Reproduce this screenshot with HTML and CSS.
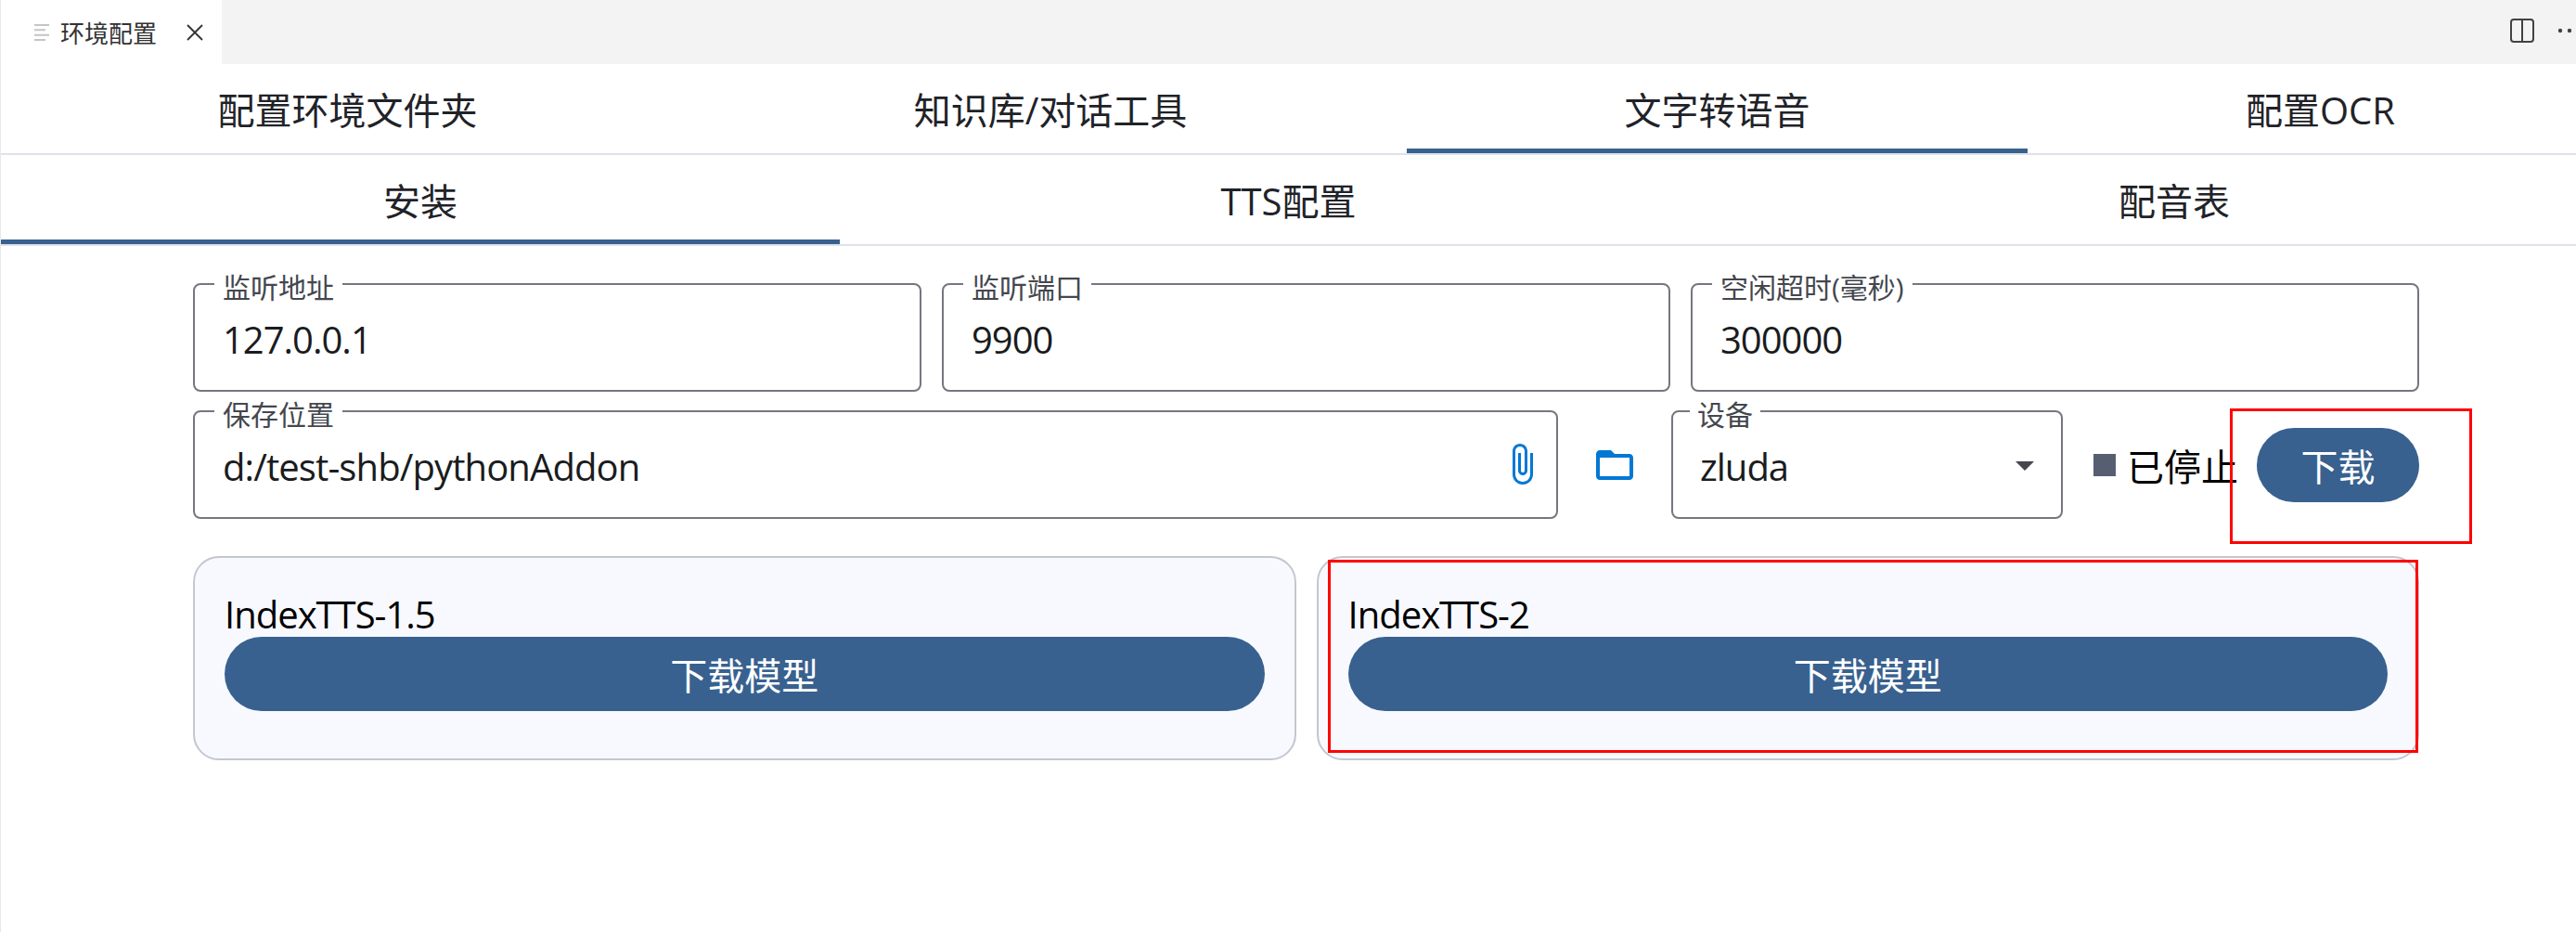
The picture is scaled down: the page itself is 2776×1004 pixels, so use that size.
FILE: index.html
```html
<!DOCTYPE html>
<html lang="zh-CN">
<head>
    <meta charset="UTF-8">
    <title>环境配置</title>
    <link rel="stylesheet" href="styles.css">
</head>
<body>
    <header class="editor-bar">
        <div class="editor-tab">
            <svg class="tab-lines" width="16" height="18" viewBox="0 0 16 18">
                <path d="M0 1h16M0 6.300h12M0 11.700h16M0 17h12" stroke="#c5c5c5" stroke-width="2"/>
            </svg>
            <span class="tab-title">环境配置</span>
            <svg class="tab-close" width="18" height="18" viewBox="0 0 18 18">
                <path d="M1 1l16 16M17 1L1 17" stroke="#333" stroke-width="1.800" fill="none"/>
            </svg>
        </div>
        <div class="editor-actions">
            <svg width="26" height="26" viewBox="0 0 26 26">
                <rect x="1" y="1" width="24" height="24" rx="3" stroke="#424242" stroke-width="2" fill="none"/>
                <path d="M13 1v24" stroke="#424242" stroke-width="2"/>
            </svg>
            <svg class="more-dots" width="28" height="6" viewBox="0 0 28 6">
                <circle cx="3" cy="3" r="2.200" fill="#424242"/>
                <circle cx="13" cy="3" r="2.200" fill="#424242"/>
                <circle cx="23" cy="3" r="2.200" fill="#424242"/>
            </svg>
        </div>
    </header>

    <nav class="tabs tabs-main">
        <div class="tab">配置环境文件夹</div>
        <div class="tab">知识库/对话工具</div>
        <div class="tab active">文字转语音</div>
        <div class="tab tab-last">配置OCR</div>
    </nav>

    <nav class="tabs tabs-sub">
        <div class="tab active">安装</div>
        <div class="tab">TTS配置</div>
        <div class="tab">配音表</div>
    </nav>

    <main class="content">
        <div class="row-three">
            <div class="field">
                <span class="field-label">监听地址</span>
                <span class="field-value">127.0.0.1</span>
            </div>
            <div class="field">
                <span class="field-label">监听端口</span>
                <span class="field-value">9900</span>
            </div>
            <div class="field">
                <span class="field-label">空闲超时(毫秒)</span>
                <span class="field-value">300000</span>
            </div>
        </div>

        <div class="row-install">
            <div class="field field-path">
                <span class="field-label">保存位置</span>
                <span class="field-value">d:/test-shb/pythonAddon</span>
                <svg class="clip-icon" width="48" height="48" viewBox="0 0 24 24">
                    <path fill="#0078d4" d="M16.500 6v11.500c0 2.210-1.790 4-4 4s-4-1.790-4-4V5c0-1.380 1.120-2.500 2.500-2.500s2.500 1.120 2.500 2.500v10.500c0 .55-.45 1-1 1s-1-.45-1-1V6H10v9.500c0 1.380 1.120 2.500 2.500 2.500s2.500-1.120 2.500-2.500V5c0-2.210-1.790-4-4-4S7 2.790 7 5v12.500c0 3.040 2.460 5.500 5.500 5.500s5.500-2.460 5.500-5.500V6h-1.500z"/>
                </svg>
            </div>
            <div class="folder-btn">
                <svg width="48" height="48" viewBox="0 0 24 24">
                    <path fill="#0078d4" d="M20 6h-8l-2-2H4c-1.100 0-1.990.9-1.990 2L2 18c0 1.100.9 2 2 2h16c1.100 0 2-.9 2-2V8c0-1.100-.9-2-2-2zm0 12H4V8h16v10z"/>
                </svg>
            </div>
            <div class="field field-select">
                <span class="field-label">设备</span>
                <span class="field-value">zluda</span>
                <span class="select-arrow"></span>
            </div>
            <div class="status">
                <span class="status-square"></span>
                <span class="status-text">已停止</span>
            </div>
            <button class="pill pill-small">下载</button>
        </div>

        <div class="cards">
            <section class="card">
                <div class="card-title">IndexTTS-1.5</div>
                <button class="pill">下载模型</button>
            </section>
            <section class="card">
                <div class="card-title">IndexTTS-2</div>
                <button class="pill">下载模型</button>
            </section>
        </div>
    </main>

    <!-- red annotation boxes drawn on the screenshot -->
    <div class="mark mark-download"></div>
    <div class="mark mark-card"></div>
</body>
</html>
```

FILE: styles.css
```css
* {
    box-sizing: border-box;
    margin: 0;
    padding: 0;
}
html, body {
    height: 100%;
    overflow: hidden;
}
body {
    position: relative;
    background: #fff;
    border-left: 1px solid #e8e8e8;
    color: #1f2328;
    font-family: "Open Sans", "Noto Sans CJK SC", sans-serif;
    font-size: 40px;
}

/* editor tab strip */
.editor-bar {
    display: flex;
    justify-content: space-between;
    height: 69px;
    margin-left: -1px;
    background: #f3f3f3;
}
.editor-tab {
    display: flex;
    align-items: center;
    width: 239px;
    padding: 0 0 0 37px;
    background: #fff;
}
.tab-title {
    margin-left: 12px;
    font-size: 26px;
    color: #333;
}
.tab-close {
    margin-left: 32px;
}
.editor-actions {
    display: flex;
    align-items: center;
    gap: 25px;
    margin-right: -8px;
}
.editor-actions svg {
    margin-top: -4px;
    flex: none;
}

/* tabs */
.tabs {
    display: grid;
    border-bottom: 2px solid #dfe2eb;
}
.tabs-main {
    grid-template-columns: 747px 768px 669px 591px;
    height: 98px;
}
.tabs-sub {
    grid-template-columns: 904px 967px 904px;
    height: 98px;
}
.tab {
    display: flex;
    align-items: center;
    justify-content: center;
    height: 96px;
    padding-top: 4px;
    border-bottom: 5px solid transparent;
    white-space: nowrap;
}
.tab.active {
    border-bottom-color: #38618f;
}
.tab-last {
    padding-left: 40px;
}
.tabs-sub .tab:last-child {
    padding-left: 38px;
}

/* form */
.content {
    padding: 40px 169px 0 207px;
}
.row-three {
    display: grid;
    grid-template-columns: repeat(3, 1fr);
    gap: 22px;
    margin-bottom: 20px;
}
.row-install {
    display: flex;
    align-items: flex-start;
}
.field {
    position: relative;
    height: 117px;
    padding: 33px 30px 0;
    border: 2px solid #74777f;
    border-radius: 8px;
    line-height: 52px;
    color: #1a1c1e;
}
.field-label {
    position: absolute;
    top: -13px;
    left: 21px;
    padding: 0 9px;
    background: #fff;
    font-size: 30px;
    line-height: 32px;
    color: #44474e;
    white-space: nowrap;
}
.field-value {
    display: block;
    letter-spacing: -1px;
}
.field-path {
    flex: 1;
}
.field-path .field-value {
    letter-spacing: -.9px;
}
.clip-icon {
    position: absolute;
    top: 32px;
    right: 13px;
}
.folder-btn {
    display: flex;
    justify-content: center;
    width: 122px;
    padding-top: 35px;
}
.field-select {
    width: 422px;
    padding-left: 29px;
}
.field-select .field-label {
    left: 18px;
    padding: 0 8px;
}
.select-arrow {
    position: absolute;
    top: 53px;
    right: 29px;
    border-top: 10px solid #44474e;
    border-left: 10px solid transparent;
    border-right: 10px solid transparent;
}
.status {
    display: flex;
    align-items: center;
    gap: 12px;
    flex: none;
    width: 209px;
    height: 117px;
    padding-left: 33px;
    color: #000;
    white-space: nowrap;
}
.status-square {
    flex: none;
    width: 24px;
    height: 24px;
    background: #565e71;
}
.pill {
    display: block;
    width: 100%;
    height: 80px;
    border: none;
    border-radius: 40px;
    background: #38618f;
    color: #fff;
    font: inherit;
}
.pill-small {
    flex: none;
    width: 175px;
    margin-top: 19px;
}

/* model cards */
.cards {
    display: grid;
    grid-template-columns: repeat(2, 1fr);
    gap: 22px;
    margin-top: 40px;
}
.card {
    height: 220px;
    padding: 33px 32px 0;
    border: 2px solid #c4c6d0;
    border-radius: 28px;
    background: #f8f9ff;
}
.card-title {
    height: 52px;
    line-height: 56px;
    letter-spacing: -1px;
    color: #000;
}

/* annotation boxes */
.mark {
    position: absolute;
    border: 3px solid #f00;
}
.mark-download {
    top: 440px;
    left: 2402px;
    width: 261px;
    height: 146px;
}
.mark-card {
    top: 603px;
    left: 1430px;
    width: 1175px;
    height: 208px;
}
```
